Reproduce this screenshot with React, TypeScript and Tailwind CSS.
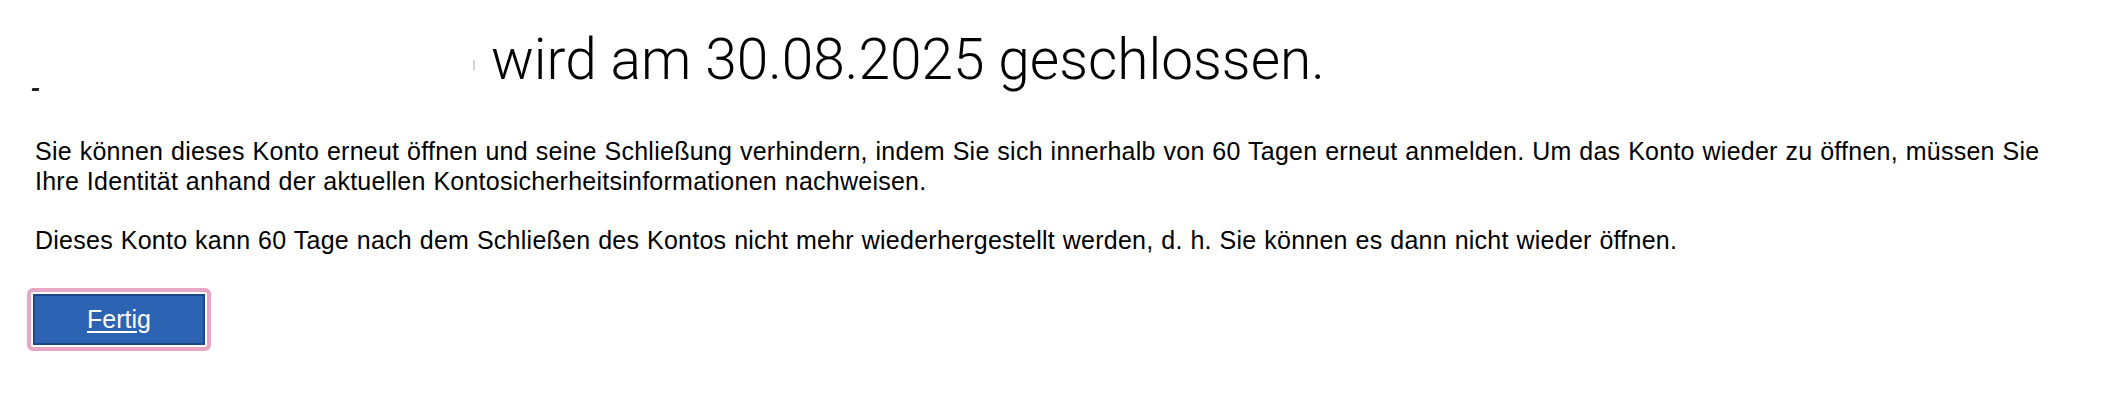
export default function App() {
  return (
    <div className="min-h-[412px] w-full bg-white text-black">
      <div className="flex items-start pt-[32px]">
        <span className="ml-[32px] mt-[56px] h-[3px] w-[7px] shrink-0 -skew-x-12 bg-[#222]" />
        <span className="ml-[434px] mt-[28px] h-[10px] w-[2px] shrink-0 bg-[#d4d4d4]" />
        <h1 className="ml-[16px] whitespace-nowrap font-['Roboto',sans-serif] text-[56.8px] font-light leading-[56px]">
          wird am 30.08.2025 geschlossen.
        </h1>
      </div>

      <div className="mt-[45px] pl-[35px] pr-[50px] font-['Liberation_Sans',Arial,sans-serif] text-[25px] leading-[30px] tracking-[0.25px] [word-spacing:0.6px]">
        <p>
          Sie können dieses Konto erneut öffnen und seine Schließung verhindern, indem Sie sich innerhalb von 60 Tagen erneut anmelden. Um das Konto wieder zu öffnen, müssen Sie Ihre Identität anhand der aktuellen Kontosicherheitsinformationen nachweisen.
        </p>
        <p className="mt-[29px]">
          Dieses Konto kann 60 Tage nach dem Schließen des Kontos nicht mehr wiederhergestellt werden, d. h. Sie können es dann nicht wieder öffnen.
        </p>
      </div>

      <div className="ml-[27px] mt-[33px] inline-block rounded-[6px] border-4 border-[#e7a6c3] bg-white p-[2px]">
        <button className="block h-[51px] w-[172px] border-2 border-[#1d4685] bg-[#2c63b2] font-['Liberation_Sans',Arial,sans-serif] text-[25px] text-white underline underline-offset-[3px]">
          Fertig
        </button>
      </div>
    </div>
  );
}
